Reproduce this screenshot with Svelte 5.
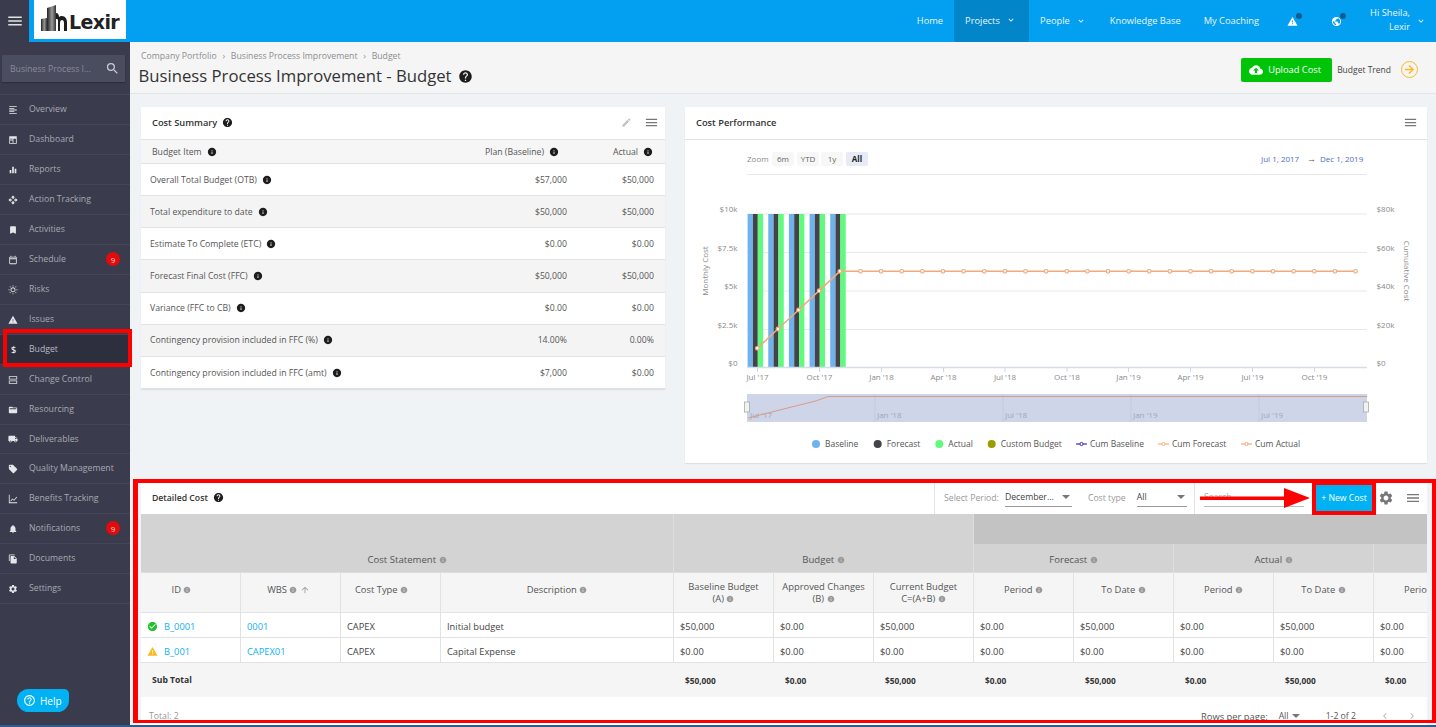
<script>
  const P = {
    menu: 'M3 18h18v-2H3v2zm0-5h18v-2H3v2zm0-7v2h18V6H3z',
    search: 'M15.5 14h-.79l-.28-.27A6.471 6.471 0 0 0 16 9.5 6.5 6.5 0 1 0 9.5 16c1.61 0 3.09-.59 4.23-1.57l.27.28v.79l5 4.99L20.49 19l-4.99-5zm-6 0C7.01 14 5 11.99 5 9.5S7.01 5 9.5 5 14 7.01 14 9.5 11.99 14 9.5 14z',
    help: 'M12 2C6.48 2 2 6.48 2 12s4.48 10 10 10 10-4.48 10-10S17.52 2 12 2zm1 17h-2v-2h2v2zm2.07-7.75l-.9.92C13.45 12.9 13 13.5 13 15h-2v-.5c0-1.1.45-2.1 1.17-2.83l1.24-1.26c.37-.36.59-.86.59-1.41 0-1.1-.9-2-2-2s-2 .9-2 2H8c0-2.21 1.79-4 4-4s4 1.79 4 4c0 .88-.36 1.68-.93 2.25z',
    info: 'M12 2C6.48 2 2 6.48 2 12s4.48 10 10 10 10-4.48 10-10S17.52 2 12 2zm1 15h-2v-6h2v6zm0-8h-2V7h2v2z',
    chev: 'M7.41 8.59 12 13.17l4.59-4.58L18 10l-6 6-6-6z',
    left: 'M15.41 7.41 14 6l-6 6 6 6 1.41-1.41L10.83 12z',
    right: 'M10 6 8.59 7.41 13.17 12l-4.58 4.59L10 18l6-6z',
    warn: 'M1 21h22L12 2 1 21zm12-3h-2v-2h2v2zm0-4h-2v-4h2v4z',
    gear: 'M19.14 12.94c.04-.3.06-.61.06-.94 0-.32-.02-.64-.07-.94l2.03-1.58a.49.49 0 0 0 .12-.61l-1.92-3.32a.488.488 0 0 0-.59-.22l-2.39.96c-.5-.38-1.03-.7-1.62-.94l-.36-2.54a.484.484 0 0 0-.48-.41h-3.84c-.24 0-.43.17-.47.41l-.36 2.54c-.59.24-1.13.57-1.62.94l-2.39-.96c-.22-.08-.47 0-.59.22L2.74 8.87c-.12.21-.08.47.12.61l2.03 1.58c-.05.3-.09.63-.09.94s.02.64.07.94l-2.03 1.58a.49.49 0 0 0-.12.61l1.92 3.32c.12.22.37.29.59.22l2.39-.96c.5.38 1.03.7 1.62.94l.36 2.54c.05.24.24.41.48.41h3.84c.24 0 .44-.17.47-.41l.36-2.54c.59-.24 1.13-.56 1.62-.94l2.39.96c.22.08.47 0 .59-.22l1.92-3.32c.12-.22.07-.47-.12-.61l-2.01-1.58zM12 15.6c-1.98 0-3.6-1.62-3.6-3.6s1.62-3.6 3.6-3.6 3.6 1.62 3.6 3.6-1.62 3.6-3.6 3.6z',
    edit: 'M3 17.25V21h3.75L17.81 9.94l-3.75-3.75L3 17.25zM20.71 7.04a.996.996 0 0 0 0-1.41l-2.34-2.34a.996.996 0 0 0-1.41 0l-1.83 1.83 3.75 3.75 1.83-1.83z',
    cloud: 'M19.35 10.04C18.67 6.59 15.64 4 12 4 9.11 4 6.6 5.64 5.35 8.04 2.34 8.36 0 10.91 0 14c0 3.31 2.69 6 6 6h13c2.76 0 5-2.24 5-5 0-2.64-2.05-4.78-4.65-4.96zM14 13v4h-4v-4H7l5-5 5 5h-3z',
    forward: 'M12 4l-1.41 1.41L16.17 11H4v2h12.17l-5.58 5.59L12 20l8-8z',
    check: 'M12 2C6.48 2 2 6.48 2 12s4.48 10 10 10 10-4.48 10-10S17.52 2 12 2zm-2 15-5-5 1.41-1.41L10 14.17l7.59-7.59L19 8l-9 9z',
    up: 'M4 12l1.41 1.41L11 7.83V20h2V7.83l5.58 5.59L20 12l-8-8-8 8z',
    globe: 'M12 2C6.48 2 2 6.48 2 12s4.48 10 10 10 10-4.48 10-10S17.52 2 12 2zm-1 17.93c-3.95-.49-7-3.85-7-7.93 0-.62.08-1.21.21-1.79L9 15v1c0 1.1.9 2 2 2v1.93zm6.9-2.54c-.26-.81-1-1.39-1.9-1.39h-1v-3c0-.55-.45-1-1-1H8v-2h2c.55 0 1-.45 1-1V7h2c1.1 0 2-.9 2-2v-.41c2.93 1.19 5 4.06 5 7.41 0 2.08-.8 3.97-2.1 5.39z',
    overview: 'M15 15H3v2h12v-2zm0-8H3v2h12V7zM3 13h18v-2H3v2zm0 8h18v-2H3v2zM3 3v2h18V3H3z',
    dash: 'M3 3h18v18H3V3zm2 6v2h6V9H5zm8 0v10h6V9h-6zm-8 4v6h6v-6H5z',
    reports: 'M10 20h4V4h-4v16zm-6 0h4v-8H4v8zM16 9v11h4V9h-4z',
    move: 'M10 9h4V6h3l-5-5-5 5h3v3zm-1 1H6V7l-5 5 5 5v-3h3v-4zm14 2l-5-5v3h-3v4h3v3l5-5zm-9 3h-4v3H7l5 5 5-5h-3v-3z',
    mark: 'M17 3H7c-1.1 0-1.99.9-1.99 2L5 21l7-3 7 3V5c0-1.1-.9-2-2-2z',
    cal: 'M19 4h-1V2h-2v2H8V2H6v2H5c-1.1 0-2 .9-2 2v14c0 1.1.9 2 2 2h14c1.1 0 2-.9 2-2V6c0-1.1-.9-2-2-2zm0 16H5V10h14v10zm0-12H5V6h14v2z',
    sun: 'M6.76 4.84l-1.8-1.79-1.41 1.41 1.79 1.79 1.42-1.41zM4 10.5H1v2h3v-2zm9-9.95h-2V3.5h2V.55zm7.45 3.91l-1.41-1.41-1.79 1.79 1.41 1.41 1.79-1.79zm-3.21 13.7l1.79 1.8 1.41-1.41-1.8-1.79-1.4 1.4zM20 10.5v2h3v-2h-3zm-8-5c-3.31 0-6 2.69-6 6s2.69 6 6 6 6-2.69 6-6-2.69-6-6-6zm0 2a4 4 0 1 1 0 8 4 4 0 0 1 0-8zm-1 14.95h2V19.5h-2v2.95zm-7.45-3.91l1.41 1.41 1.79-1.8-1.41-1.41-1.79 1.8z',
    storage: 'M2 3h20v8H2V3zm2 2v4h16V5H4zM2 13h20v8H2v-8zm2 2v4h16v-4H4z',
    folder: 'M20 6h-8l-2-2H4c-1.1 0-1.99.9-1.99 2L2 18c0 1.1.9 2 2 2h16c1.1 0 2-.9 2-2V8c0-1.1-.9-2-2-2zm0 4H4V8h16v2z',
    truck: 'M20 8h-3V4H3c-1.1 0-2 .9-2 2v11h2c0 1.66 1.34 3 3 3s3-1.34 3-3h6c0 1.66 1.34 3 3 3s3-1.34 3-3h2v-5l-3-4zM6 18.5c-.83 0-1.5-.67-1.5-1.5s.67-1.5 1.5-1.5 1.5.67 1.5 1.5-.67 1.5-1.5 1.5zm13.5-9l1.96 2.5H17V9.5h2.5zm-1.5 9c-.83 0-1.5-.67-1.5-1.5s.67-1.5 1.5-1.5 1.5.67 1.5 1.5-.67 1.5-1.5 1.5z',
    tag: 'M21.41 11.58l-9-9C12.05 2.22 11.55 2 11 2H4c-1.1 0-2 .9-2 2v7c0 .55.22 1.05.59 1.42l9 9c.36.36.86.58 1.41.58.55 0 1.05-.22 1.41-.59l7-7c.37-.36.59-.86.59-1.41 0-.55-.23-1.06-.59-1.42zM5.5 7C4.67 7 4 6.33 4 5.5S4.67 4 5.5 4 7 4.67 7 5.5 6.33 7 5.5 7z',
    trend: 'M2 2h2v18h18v2H2V2zm3.5 14.5l5-6 4 3 6-7 1.4 1.2-7.1 8.3-4-3-3.8 4.7-1.5-1.2z',
    bell: 'M12 22c1.1 0 2-.9 2-2h-4c0 1.1.89 2 2 2zm6-6v-5c0-3.07-1.64-5.64-4.5-6.32V4c0-.83-.67-1.5-1.5-1.5s-1.5.67-1.5 1.5v.68C7.63 5.36 6 7.92 6 11v5l-2 2v1h16v-1l-2-2z',
    docs: 'M16 1H4c-1.1 0-2 .9-2 2v14h2V3h12V1zm-1 4l6 6v10c0 1.1-.9 2-2 2H7.99C6.89 23 6 22.1 6 21l.01-14c0-1.1.89-2 2-2h7zm-1 7h5.5L14 6.5V12z',
    helpo: 'M11 18h2v-2h-2v2zm1-16C6.48 2 2 6.48 2 12s4.48 10 10 10 10-4.48 10-10S17.52 2 12 2zm0 18c-4.41 0-8-3.59-8-8s3.59-8 8-8 8 3.59 8 8-3.59 8-8 8zm0-14c-2.21 0-4 1.79-4 4h2c0-1.1.9-2 2-2s2 .9 2 2c0 2-3 1.75-3 5h2c0-2.25 3-2.5 3-5 0-2.21-1.79-4-4-4z'
  };

  const nav = [
    { t: 'Overview', i: 'overview' }, { t: 'Dashboard', i: 'dash' }, { t: 'Reports', i: 'reports' },
    { t: 'Action Tracking', i: 'move' }, { t: 'Activities', i: 'mark' }, { t: 'Schedule', i: 'cal', b: 9 },
    { t: 'Risks', i: 'sun' }, { t: 'Issues', i: 'warn' }, { t: 'Budget', d: true, a: true },
    { t: 'Change Control', i: 'storage' }, { t: 'Resourcing', i: 'folder' }, { t: 'Deliverables', i: 'truck', tight: true },
    { t: 'Quality Management', i: 'tag' }, { t: 'Benefits Tracking', i: 'trend' }, { t: 'Notifications', i: 'bell', b: 9 },
    { t: 'Documents', i: 'docs' }, { t: 'Settings', i: 'gear' }
  ];

  const summary = [
    ['Overall Total Budget (OTB)', '$57,000', '$50,000'],
    ['Total expenditure to date', '$50,000', '$50,000'],
    ['Estimate To Complete (ETC)', '$0.00', '$0.00'],
    ['Forecast Final Cost (FFC)', '$50,000', '$50,000'],
    ['Variance (FFC to CB)', '$0.00', '$0.00'],
    ['Contingency provision included in FFC (%)', '14.00%', '0.00%'],
    ['Contingency provision included in FFC (amt)', '$7,000', '$0.00']
  ];

  const gridYs = [214, 252.5, 291, 329.5];
  const yLeft = [['$10k', 214], ['$7.5k', 252.5], ['$5k', 291], ['$2.5k', 329.5], ['$0', 367.5]];
  const yRight = [['$80k', 214], ['$60k', 252.5], ['$40k', 291], ['$20k', 329.5], ['$0', 367.5]];
  const xLabels = [["Jul '17", 757.5], ["Oct '17", 819.5], ["Jan '18", 881.5], ["Apr '18", 943.5], ["Jul '18", 1005], ["Oct '18", 1067], ["Jan '19", 1128.5], ["Apr '19", 1190.5], ["Jul '19", 1252.5], ["Oct '19", 1314.5]];
  const navLabels = [["Jan '18", 877], ["Jul '18", 1005], ["Jan '19", 1133], ["Jul '19", 1261]];
  const groups = [0, 1, 2, 3, 4].map((n) => 747.6 + n * 20.65);
  const yVals = [348.3, 329, 310, 290.7, 271.3];
  const pts = Array.from({ length: 30 }, (_, n) => [757.3 + n * 20.63, yVals[n] ?? 271.3]);
  const linePath = pts.map((p) => p.join(',')).join(' ');

  const zoomBtns = [['6m', 772, 22], ['YTD', 797, 22], ['1y', 821, 22]];
  const legendDots = [['Baseline', 816, '#6fb3ee'], ['Forecast', 877.7, '#434348'], ['Actual', 939.3, '#5ffa7e'], ['Custom Budget', 991.7, '#9c9c00']];
  const legendLines = [['Cum Baseline', 1076, '#3f2db0'], ['Cum Forecast', 1158, '#f7b27c'], ['Cum Actual', 1241, '#f4a77c']];

  const amounts = [
    ['$50,000', '$0.00', '$50,000', '$0.00', '$50,000', '$0.00', '$50,000', '$0.00'],
    ['$0.00', '$0.00', '$0.00', '$0.00', '$0.00', '$0.00', '$0.00', '$0.00']
  ];
  const rows = [
    { s: 'check', c: 'ok', id: 'B_0001', wbs: '0001', type: 'CAPEX', desc: 'Initial budget', v: amounts[0] },
    { s: 'warn', c: 'alert', id: 'B_001', wbs: 'CAPEX01', type: 'CAPEX', desc: 'Capital Expense', v: amounts[1] }
  ];
  const subtotal = amounts[0];
  const colHeads = ['Period', 'To Date', 'Period', 'To Date'];
  const restCols = Array.from({ length: 8 }, (_, n) => n);
</script>

{#snippet ic(name, cls)}
  <svg class={'ic ' + (cls || '')} viewBox="0 0 24 24" aria-hidden="true"><path d={P[name]} /></svg>
{/snippet}

<div class="app">
  <header class="top">
    <button class="burger" aria-label="Menu">{@render ic('menu', 'i18')}</button>
    <div class="logo">
      <svg viewBox="0 0 26 26" class="logomark" aria-hidden="true">
        <defs>
          <linearGradient id="tw" x1="0" x2="1" y1="0" y2="0">
            <stop offset="0" stop-color="#222" />
            <stop offset="0.55" stop-color="#999" />
            <stop offset="1" stop-color="#333" />
          </linearGradient>
        </defs>
        <path d="M0 26V14l6-1v13z" fill="url(#tw)" />
        <path d="M6 26V3l9-3v26z" fill="url(#tw)" />
        <path d="M15 26V8c2 0 3 2 3 4 1-1 2-1 3-1 3 0 5 3 5 6v9h-3v-8c0-2-1-3-2-3s-2 1-2 3v8h-2V15c0-1-1-1-2-1z" fill="#1c1c1c" />
      </svg>
      <span>Lexir</span>
    </div>
    <nav class="topnav">
      <span class="tn home">Home</span>
      <span class="tn active">Projects {@render ic('chev', 'i10')}</span>
      <span class="tn people">People {@render ic('chev', 'i10')}</span>
      <span class="tn kb">Knowledge Base</span>
      <span class="tn mc">My Coaching</span>
      <span class="dotted warnicon">{@render ic('warn', 'i11')}<i></i></span>
      <span class="dotted globeicon">{@render ic('globe', 'i11')}<i></i></span>
      <span class="hi">Hi Sheila,<br />Lexir</span>
      {@render ic('chev', 'i10')}
    </nav>
  </header>

  <div class="shell">
    <aside class="side">
      <div class="searchbox"><span>Business Process I...</span>{@render ic('search', 'i15')}</div>
      <ul>
        {#each nav as n}
          <li class:on={n.a} class:tight={n.tight}>
            <span class="nic">{#if n.d}<b class="dollar">$</b>{:else}{@render ic(n.i, 'i10')}{/if}</span>
            <span class="nt">{n.t}</span>
            {#if n.b}<em class="badge">{n.b}</em>{/if}
          </li>
        {/each}
      </ul>
      <div class="helpbtn">{@render ic('helpo', 'i13')}<span>Help</span></div>
    </aside>

    <main class="main">
      <div class="pagehead">
        <div>
          <div class="crumbs">Company Portfolio <s>›</s> Business Process Improvement <s>›</s> Budget</div>
          <h1>Business Process Improvement - Budget {@render ic('help', 'i15 dark')}</h1>
        </div>
        <div class="actions">
          <button class="upload">{@render ic('cloud', 'i14')}<span>Upload Cost</span></button>
          <span class="trend">Budget Trend</span>
          <span class="trendbtn">{@render ic('forward', 'i13 bold')}</span>
        </div>
      </div>

      <div class="content">
        <div class="toprow">
          <section class="card summary">
            <div class="cardhead">
              <strong>Cost Summary</strong>{@render ic('help', 'i11 dark')}
              <span class="grow"></span>
              {@render ic('edit', 'i11 pale')}
              {@render ic('menu', 'i15 grey')}
            </div>
            <div class="sumhead">
              <span class="l1">Budget Item {@render ic('info', 'i10 dark')}</span>
              <span class="c2">Plan (Baseline) {@render ic('info', 'i10 dark')}</span>
              <span class="c3">Actual {@render ic('info', 'i10 dark')}</span>
            </div>
            {#each summary as r}
              <div class="sumrow">
                <span class="l1">{r[0]} {@render ic('info', 'i10 dark')}</span>
                <span class="v2">{r[1]}</span>
                <span class="v3">{r[2]}</span>
              </div>
            {/each}
          </section>

          <section class="card perf">
            <div class="cardhead">
              <strong>Cost Performance</strong>
              <span class="grow"></span>
              {@render ic('menu', 'i15 grey')}
            </div>
            <svg class="chart" viewBox="685 140 742 323" width="742" height="323" role="img" aria-label="Cost Performance chart">
              <text x="747" y="162" class="ax">Zoom</text>
              {#each zoomBtns as b}
                <rect x={b[1]} y="152" width={b[2]} height="14" rx="2" fill="#f7f7f7" />
                <text x={b[1] + b[2] / 2} y="162" class="ax mid dk">{b[0]}</text>
              {/each}
              <rect x="846" y="152" width="22" height="14" rx="2" fill="#e6ebf5" />
              <text x="857" y="162" class="ax mid allb">All</text>
              <text x="1261" y="162" class="date">Jul 1, 2017</text>
              <text x="1307" y="162" class="arr">→</text>
              <text x="1320" y="162" class="date">Dec 1, 2019</text>

              <line x1="747" x2="1367" y1="174.5" y2="174.5" class="grid" />
              {#each gridYs as y}<line x1="747" x2="1367" y1={y} y2={y} class="grid" />{/each}
              {#each groups as g}
                <rect x={g} y="214" width="5.3" height="153" fill="#6fb3ee" />
                <rect x={g + 5.3} y="214" width="4.9" height="153" fill="#434348" />
                <rect x={g + 10.2} y="214" width="5.3" height="153" fill="#5ffa7e" />
              {/each}
              <line x1="747" x2="1367" y1="367.5" y2="367.5" class="zero" />
              {#each xLabels as l}
                <line x1={l[1]} x2={l[1]} y1="368" y2="372" class="tick" />
                <text x={l[1]} y="380" class="ax mid">{l[0]}</text>
              {/each}
              {#each yLeft as l}<text x="737.5" y={l[1]} class="ax end" dy="-2">{l[0]}</text>{/each}
              {#each yRight as l}<text x="1376.5" y={l[1]} class="ax" dy="-2">{l[0]}</text>{/each}
              <text transform="translate(708,271) rotate(-90)" class="ax mid title">Monthly Cost</text>
              <text transform="translate(1404,271) rotate(90)" class="ax mid title">Cumulative Cost</text>

              <polyline points={linePath} class="series" />
              {#each pts as p}<circle cx={p[0]} cy={p[1]} r="1.8" class="marker" />{/each}

              <rect x="747" y="394" width="620" height="28" fill="#cfd5e8" />
              {#each navLabels as l}
                <line x1={l[1] - 2} x2={l[1] - 2} y1="394" y2="422" stroke="#bcc3d8" stroke-width="0.6" />
                <text x={l[1]} y="418" class="navt">{l[0]}</text>
              {/each}
              <text x="750" y="418" class="navt">Jul '17</text>
              <polyline points="748,418 816.7,400.7 828,396.5 1367,396.5" class="navline" />
              <rect x="744.5" y="402" width="5" height="10" class="handle" />
              <rect x="1363.5" y="402" width="5" height="10" class="handle" />

              {#each legendDots as l}
                <circle cx={l[1]} cy="444" r="4" fill={l[2]} />
                <text x={l[1] + 9} y="447" class="leg">{l[0]}</text>
              {/each}
              {#each legendLines as l}
                <line x1={l[1]} x2={l[1] + 11} y1="444" y2="444" stroke={l[2]} stroke-width="1.2" />
                <circle cx={l[1] + 5.5} cy="444" r="1.6" fill="#fff" stroke={l[2]} />
                <text x={l[1] + 14} y="447" class="leg">{l[0]}</text>
              {/each}
            </svg>
          </section>
        </div>

        <section class="card detail">
          <div class="dhead">
            <div class="dtitle"><strong>Detailed Cost</strong>{@render ic('help', 'i11 dark')}</div>
            <div class="filter">
              <span class="fl">Select Period:</span>
              <span class="sel s1"><span>December...</span><i></i></span>
              <span class="fl ct">Cost type</span>
              <span class="sel s2"><span>All</span><i></i></span>
            </div>
            <div class="searchf"><span>Search</span></div>
            <button class="newcost">+ New Cost</button>
            <span class="gear">{@render ic('gear', 'i16 grey')}</span>
            <span class="dmenu">{@render ic('menu', 'i16 grey')}</span>
          </div>

          <div class="tablewrap">
            <table>
              <colgroup>
                <col class="w" /><col class="w" /><col class="w" /><col class="wd" />
                {#each restCols as c (c)}<col class="w" />{/each}
              </colgroup>
              <thead>
                <tr class="h1">
                  <th colspan="4" rowspan="2" class="grp low">Cost Statement {@render ic('info', 'i8 g')}</th>
                  <th colspan="3" rowspan="2" class="grp low">Budget {@render ic('info', 'i8 g')}</th>
                  <th colspan="5" class="darkgrp"></th>
                </tr>
                <tr class="h2">
                  <th colspan="2" class="grp">Forecast {@render ic('info', 'i8 g')}</th>
                  <th colspan="2" class="grp">Actual {@render ic('info', 'i8 g')}</th>
                  <th class="grp"></th>
                </tr>
                <tr class="h3">
                  <th class="offs">ID {@render ic('info', 'i8 g')}</th>
                  <th class="offw">WBS {@render ic('info', 'i8 g')} {@render ic('up', 'i10 g')}</th>
                  <th class="offs">Cost Type {@render ic('info', 'i8 g')}</th>
                  <th>Description {@render ic('info', 'i8 g')}</th>
                  <th class="two">Baseline Budget<br />(A) {@render ic('info', 'i8 g')}</th>
                  <th class="two">Approved Changes<br />(B) {@render ic('info', 'i8 g')}</th>
                  <th class="two">Current Budget<br />C=(A+B) {@render ic('info', 'i8 g')}</th>
                  {#each colHeads as c}<th>{c} {@render ic('info', 'i8 g')}</th>{/each}
                  <th>Period {@render ic('info', 'i8 g')}</th>
                </tr>
              </thead>
              <tbody>
                {#each rows as r}
                  <tr class="dr">
                    <td class="idc">{@render ic(r.s, 'i11 ' + r.c)}<a href="#b">{r.id}</a></td>
                    <td><a href="#b">{r.wbs}</a></td>
                    <td>{r.type}</td>
                    <td>{r.desc}</td>
                    {#each r.v as v}<td>{v}</td>{/each}
                  </tr>
                {/each}
                <tr class="sub">
                  <td colspan="4" class="subl">Sub Total</td>
                  {#each subtotal as v}<td>{v}</td>{/each}
                </tr>
              </tbody>
            </table>
          </div>

          <div class="foot">
            <span class="tot">Total: 2</span>
            <span class="grow"></span>
            <span class="rpp">Rows per page:</span>
            <span class="rp">All <i></i></span>
            <span class="pg">1-2 of 2</span>
            <span class="pv">{@render ic('left', 'i12')}</span>
            <span class="nx">{@render ic('right', 'i12')}</span>
          </div>
        </section>
      </div>
    </main>
  </div>

  <div class="mark m1"></div>
  <div class="mark m2"></div>
  <div class="mark m3"></div>
  <svg class="arrow" viewBox="0 0 110 20" aria-hidden="true"><path d="M0 8.500h84V0l26 10-26 10v-8H0z" fill="#f00" /></svg>
  <div class="strip"></div>
</div>

<style>
  :global(body) { margin: 0; background: #eff3f6; font-family: "Open Sans", sans-serif; overflow: hidden; }
  .app { position: relative; width: 1436px; height: 727px; overflow: hidden; color: #444; font-size: 9px; }
  .ic { display: inline-block; fill: currentColor; vertical-align: middle; flex: none; }
  .i8 { width: 8px; height: 8px; }
  .i10 { width: 10px; height: 10px; }
  .i11 { width: 11px; height: 11px; }
  .i12 { width: 12px; height: 12px; }
  .i13 { width: 13px; height: 13px; }
  .i14 { width: 14px; height: 14px; }
  .i15 { width: 15px; height: 15px; }
  .i16 { width: 16px; height: 16px; }
  .i18 { width: 18px; height: 18px; }
  .dark { color: #1d1d1d; }
  .grey { color: #777; }
  .pale { color: #c4c4c4; }
  .g { color: #9a9a9a; }
  .ok { color: #1fc02a; }
  .alert { color: #fbb923; }
  .bold { stroke: currentColor; stroke-width: 1; }
  .grow { flex: 1; }

  .top { height: 42px; background: #039ff0; display: flex; color: #e8f6ff; }
  .burger { width: 29px; height: 42px; padding: 0; border: 0; background: #3a3c4d; color: #e2e2e2; display: flex; align-items: center; justify-content: center; }
  .logo { margin-left: 5px; width: 92px; height: 39px; background: #fff; display: flex; align-items: flex-start; gap: 2px; padding: 5px 0 0 7px; box-sizing: border-box; }
  .logomark { width: 26px; height: 26px; }
  .logo span { font: 900 19px "DejaVu Sans", sans-serif; color: #222; letter-spacing: -0.6px; margin-top: 8px; line-height: 19px; }
  .topnav { margin-left: auto; display: flex; align-items: center; height: 42px; font-size: 9.3px; padding-right: 10px; }
  .tn { white-space: nowrap; padding-bottom: 1px; }
  .home { margin-right: 11px; }
  .active { background: #0285c9; height: 42px; width: 75px; box-sizing: border-box; padding: 0 0 2px 11px; display: flex; align-items: center; gap: 6px; border-radius: 0 0 2px 2px; }
  .people { margin-left: 11px; display: flex; align-items: center; gap: 6px; }
  .kb { margin-left: 24px; }
  .mc { margin-left: 23px; }
  .dotted { position: relative; color: #fff; display: inline-flex; }
  .dotted i { position: absolute; width: 6px; height: 6px; border-radius: 50%; background: #125b92; top: -3px; right: -4px; }
  .warnicon { margin-left: 28px; }
  .globeicon { margin-left: 33px; }
  .hi { margin-left: 27px; text-align: right; line-height: 14.500px; width: 41px; white-space: nowrap; margin-top: -2px; }
  .topnav > .ic:last-child { margin-left: 6px; }

  .shell { display: flex; height: 685px; }
  .side { width: 130px; flex: none; background: #3a3c4d; color: #a8a9b3; display: flex; flex-direction: column; font-size: 8.7px; }
  .searchbox { margin: 13px 5px 12px 2px; height: 27px; background: #4a4c60; box-shadow: 0 1px 1px #2d2e3c; display: flex; align-items: center; justify-content: space-between; padding: 0 5px 0 8px; color: #8a8b98; white-space: nowrap; }
  .searchbox .ic { color: #c9cad2; }
  .side ul { list-style: none; margin: 0; padding: 0; border-top: 1px solid #444657; }
  .side li { height: 29px; border-bottom: 1px solid #444657; display: flex; align-items: center; padding: 0 10px 0 8px; }
  .side li.tight { height: 28px; }
  .side li.on { background: #2d2f3e; color: #b8b9c2; }
  .nic { width: 21px; color: #e6e6ea; display: flex; align-items: center; }
  .dollar { font: 600 9px "Open Sans", sans-serif; padding-left: 3px; }
  .nt { white-space: nowrap; padding-bottom: 1px; }
  .badge { margin-left: auto; width: 14px; height: 14px; border-radius: 50%; background: #e20a0a; color: #f7d7d7; font-style: normal; font-size: 8px; display: flex; align-items: center; justify-content: center; margin-top: -1px; }
  .helpbtn { margin: auto 0 15px 17px; width: 52px; height: 23px; box-sizing: border-box; background: #00b2f4; color: #fff; border-radius: 12px 5px 12px 12px; display: flex; align-items: center; gap: 4px; padding-left: 6px; font-size: 10px; }

  .main { flex: 1; min-width: 0; display: flex; flex-direction: column; }
  .pagehead { height: 51px; background: #f5f5f5; border-bottom: 1px solid #e2e4e6; display: flex; justify-content: space-between; flex: none; }
  .crumbs { margin: 8px 0 0 11px; font-size: 8.7px; color: #8d8d8d; line-height: 12px; white-space: nowrap; }
  .crumbs s { text-decoration: none; margin: 0 3.5px; }
  h1 { margin: 3px 0 0 8.500px; font-weight: 400; font-size: 16.700px; line-height: 22px; color: #333; white-space: nowrap; }
  h1 .ic { margin: -2px 0 0 2px; }
  .actions { display: flex; align-items: center; margin-top: 4px; padding-right: 18px; }
  .upload { width: 91px; height: 24px; padding: 0 0 0 8px; border: 0; border-radius: 2px; background: #00c408; color: #fff; font: 400 9.300px "Open Sans", sans-serif; display: flex; align-items: center; gap: 5px; }
  .trend { margin-left: 5px; font-size: 8.500px; color: #444; white-space: nowrap; }
  .trendbtn { margin-left: 10px; width: 17px; height: 17px; box-sizing: border-box; border: 1.5px solid #fbb923; border-radius: 50%; color: #fbb923; display: flex; align-items: center; justify-content: center; }

  .content { padding: 13px 9px 0 11px; }
  .toprow { display: grid; grid-template-columns: 524px 742px; column-gap: 20px; align-items: start; }
  .card { background: #fff; box-shadow: 0 1px 1px rgba(0,0,0,.08); }
  .cardhead { height: 33px; display: flex; align-items: center; gap: 5px; padding: 0 6px 1px 11px; box-sizing: border-box; font-size: 9.300px; color: #333; border-bottom: 1px solid #e2e2e2; }
  .perf .cardhead { padding-right: 9px; }
  .cardhead strong, .dtitle strong { font-weight: 600; white-space: nowrap; }
  .cardhead .pale { margin-right: 7px; }

  .sumhead, .sumrow { display: flex; align-items: center; padding-right: 11px; box-sizing: border-box; white-space: nowrap; font-size: 8.700px; }
  .sumhead { height: 24px; padding-top: 1px; background: #f6f6f6; border-bottom: 1px solid #e2e2e2; padding-left: 11px; color: #555; }
  .sumrow { height: 32.17px; border-bottom: 1px solid #e2e2e2; padding-left: 9px; color: #555; }
  .sumrow:nth-of-type(odd) { background: #fff; }
  .sumrow:nth-of-type(even) { background: #f4f4f4; }
  .l1 { flex: 1; display: flex; align-items: center; gap: 5px; }
  .c2 { width: 98px; display: flex; align-items: center; gap: 5px; }
  .c3 { width: 70px; display: flex; justify-content: flex-end; align-items: center; gap: 5px; margin-right: 1px; }
  .v2 { width: 100px; text-align: right; }
  .v3 { width: 87px; text-align: right; }

  .chart { display: block; font-family: "Open Sans", sans-serif; }
  .ax { font-size: 8px; fill: #8a8a8a; }
  .mid { text-anchor: middle; }
  .end { text-anchor: end; }
  .dk { fill: #666; }
  .allb { fill: #222; font-weight: 700; }
  .date { font-size: 8px; fill: #4d6fc0; }
  .arr { font-size: 9px; fill: #555; }
  .title { font-size: 8px; fill: #8a8a8a; }
  .grid { stroke: #e8e8e8; stroke-width: 1; }
  .zero { stroke: #d5dcec; stroke-width: 1.4; }
  .tick { stroke: #ccd6eb; stroke-width: 1; }
  .series { fill: none; stroke: #f3a97d; stroke-width: 1.600; }
  .marker { fill: #fff; stroke: #f3a97d; stroke-width: 1.200; }
  .navt { font-size: 8px; fill: #a0a6b8; }
  .navline { fill: none; stroke: #d99b88; stroke-width: 1; }
  .handle { fill: #f2f2f2; stroke: #aaa; stroke-width: 0.800; }
  .leg { font-size: 8.500px; fill: #555; }

  .detail { margin-top: 18px; height: 246px; overflow: hidden; box-shadow: none; }
  .dhead { height: 33px; display: flex; align-items: center; font-size: 8.700px; }
  .dtitle { width: 794px; padding-left: 11px; box-sizing: border-box; height: 33px; display: flex; align-items: center; gap: 5px; color: #333; border-right: 1px solid #e4e4e4; }
  .filter { width: 260px; height: 33px; box-sizing: border-box; padding-left: 9px; display: flex; align-items: center; border-right: 1px solid #e4e4e4; white-space: nowrap; }
  .fl { color: #999; }
  .ct { margin-left: 16px; }
  .sel { display: flex; justify-content: space-between; align-items: center; height: 19px; box-sizing: border-box; border-bottom: 1px solid #999; color: #444; }
  .sel i, .rp i { width: 0; height: 0; border-left: 4px solid transparent; border-right: 4px solid transparent; border-top: 4px solid #777; display: inline-block; }
  .s1 { width: 67px; margin-left: 6px; }
  .s2 { width: 50px; margin-left: 11px; }
  .s2 i, .s1 i { margin-right: 2px; }
  .searchf { width: 100px; margin: 0 0 0 9px; height: 19px; line-height: 18px; box-sizing: border-box; border-bottom: 1px solid #bbb; color: #aaa; }
  .newcost { margin-left: 12px; width: 56px; height: 27px; padding: 0; border: 0; background: #00b2f4; color: #fff; font: 400 8.700px "Open Sans", sans-serif; white-space: nowrap; }
  .gear { margin-left: 6px; display: flex; }
  .dmenu { margin-left: 11px; display: flex; }

  .tablewrap { overflow: hidden; }
  table { table-layout: fixed; border-collapse: separate; border-spacing: 0; width: 1333px; font-size: 9.300px; color: #555; }
  col.w { width: 100px; }
  col.wd { width: 233px; }
  th { font-weight: 400; box-sizing: border-box; border-right: 1px solid #e2e2e2; border-bottom: 1px solid #e2e2e2; padding: 0; color: #555; vertical-align: middle; }
  .h1 th { height: 30px; }
  .h2 th { height: 29px; padding-top: 2px; }
  .darkgrp { background: #c3c3c3; border-color: #c3c3c3; }
  th.grp { background: #d3d3d3; border-color: #dedede; font-size: 9.600px; }
  th.low { vertical-align: bottom; padding-bottom: 6px; }
  .h3 th { height: 40px; background: #f5f5f5; vertical-align: top; padding-top: 10px; font-size: 9.400px; }
  .h3 th.two { padding-top: 8px; line-height: 11.500px; }
  .h3 th.offs { padding-right: 18px; }
  .h3 th.offw { padding-right: 4px; }
  td { box-sizing: border-box; border-right: 1px solid #e2e2e2; border-bottom: 1px solid #e2e2e2; padding: 0 0 0 6px; white-space: nowrap; }
  .dr td { height: 25px; color: #444; padding-top: 2px; }
  a { color: #0fb0f2; text-decoration: none; }
  .idc .ic { margin-right: 6px; margin-top: -1px; }
  .sub td { height: 34px; background: #f5f5f5; border: 0; font-weight: 700; font-size: 8.300px; color: #333; padding-left: 11px; }
  .sub td.subl { font-size: 8.600px; }

  .foot { display: flex; align-items: center; height: 38px; padding: 0 9px 0 8px; font-size: 8.700px; color: #555; box-sizing: border-box; }
  .tot { color: #999; }
  .rpp { font-size: 9.400px; }
  .rp { margin-left: 11px; width: 22px; display: flex; align-items: center; gap: 3px; }
  .pg { margin-left: 25px; }
  .pv { margin-left: 23px; color: #bbb; display: flex; }
  .nx { margin-left: 15px; color: #bbb; display: flex; }

  .mark { position: absolute; border: 4px solid #f00; box-sizing: border-box; pointer-events: none; }
  .m1 { left: 3px; top: 329px; width: 129px; height: 38px; }
  .m2 { left: 133px; top: 479px; width: 1303px; height: 244px; border-width: 4px 4px 3px 5px; }
  .m3 { left: 1312px; top: 481px; width: 64px; height: 34px; }
  .arrow { position: absolute; left: 1200px; top: 488px; width: 110px; height: 20px; }
  .strip { position: absolute; left: 0; right: 0; top: 725px; height: 2px; background: #2a5e8f; }
</style>
